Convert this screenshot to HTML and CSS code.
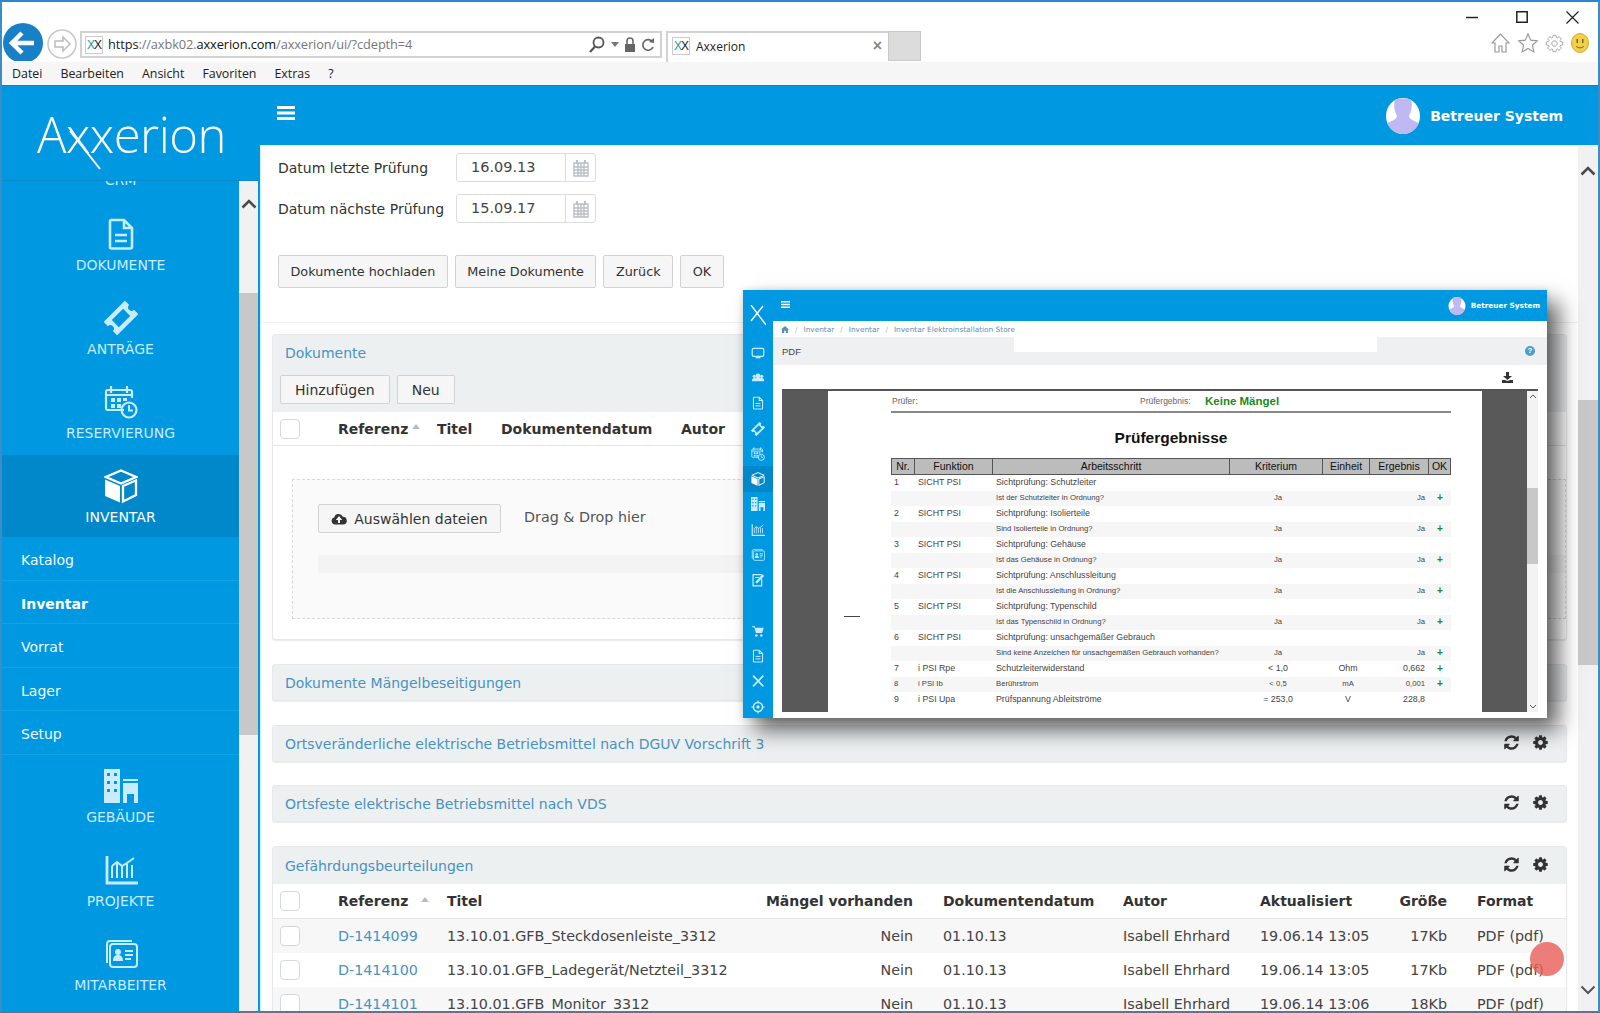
FILE: index.html
```html
<!DOCTYPE html>
<html lang="de">
<head>
<meta charset="utf-8">
<title>Axxerion</title>
<link rel="stylesheet" href="styles.css">
</head>
<body>
<svg class="defs" aria-hidden="true">
  <symbol id="i-refresh" viewBox="0 0 1792 1792"><path d="M1639 1056q0 5-1 7-64 268-268 434.5t-478 166.5q-146 0-282.5-55t-243.5-157l-129 129q-19 19-45 19t-45-19-19-45v-448q0-26 19-45t45-19h448q26 0 45 19t19 45-19 45l-137 137q71 66 161 102t187 36q134 0 250-65t186-179q11-17 53-117 8-23 30-23h192q13 0 22.5 9.5t9.5 22.5zm25-800v448q0 26-19 45t-45 19h-448q-26 0-45-19t-19-45 19-45l138-138q-148-137-349-137-134 0-250 65t-186 179q-11 17-53 117-8 23-30 23h-199q-13 0-22.5-9.5t-9.5-22.5v-7q65-268 270-434.5t480-166.5q146 0 284 55.5t245 156.5l130-129q19-19 45-19t45 19 19 45z"/></symbol>
  <symbol id="i-gear" viewBox="0 0 1792 1792"><path d="M1152 896q0-106-75-181t-181-75-181 75-75 181 75 181 181 75 181-75 75-181zm512-109v222q0 12-8 23t-20 13l-185 28q-19 54-39 91 35 50 107 138 10 12 10 25t-9 23q-27 37-99 108t-94 71q-12 0-26-9l-138-108q-44 23-91 38-16 136-29 186-7 28-36 28h-222q-14 0-24.5-8.5t-11.5-21.5l-28-184q-49-16-90-37l-141 107q-10 9-25 9-14 0-25-11-126-114-165-168-7-10-7-23 0-12 8-23 15-21 51-66.5t54-70.5q-27-50-41-99l-183-27q-13-2-21-12.5t-8-23.5v-222q0-12 8-23t19-13l186-28q14-46 39-92-40-57-107-138-10-12-10-24 0-10 9-23 26-36 98.5-107.5t94.5-71.5q13 0 26 10l138 107q44-23 91-38 16-136 29-186 7-28 36-28h222q14 0 24.5 8.5t11.5 21.5l28 184q49 16 90 37l142-107q9-9 24-9 13 0 25 10 129 119 165 170 7 8 7 22 0 12-8 23-15 21-51 66.5t-54 70.5q26 50 41 98l183 28q13 2 21 12.5t8 23.5z"/></symbol>
  <symbol id="i-doc" viewBox="0 0 34 34"><path fill="none" stroke="currentColor" stroke-width="2.6" d="M7 3h13l8 8v19a1.500 1.500 0 0 1-1.500 1.500h-19A1.500 1.500 0 0 1 6 30V4.500A1.500 1.500 0 0 1 7 3zM20 3v8h8"/><path stroke="currentColor" stroke-width="2.4" d="M11 18h12M11 24h12"/></symbol>
  <symbol id="i-ticket" viewBox="0 0 34 34"><g transform="rotate(-45 17 17)"><path fill="currentColor" fill-rule="evenodd" d="M2 7.500h30v6a3.500 3.500 0 0 0 0 7v6H2v-6a3.500 3.500 0 0 0 0-7zM9 12v10h16V12z"/></g></symbol>
  <symbol id="i-cal" viewBox="0 0 34 34"><path fill="none" stroke="currentColor" stroke-width="2.2" d="M20 25H4a2 2 0 0 1-2-2V7a2 2 0 0 1 2-2h22a2 2 0 0 1 2 2v6"/><path stroke="currentColor" stroke-width="2.2" d="M7 1v7M23 1v7M2 10h26"/><path fill="currentColor" d="M7 13h4v4H7zM13 13h4v4h-4zM19 13h4v3h-4zM7 19h4v4H7zM13 19h4v4h-4z"/><circle cx="25" cy="25" r="7.500" fill="none" stroke="currentColor" stroke-width="2.200"/><path fill="none" stroke="currentColor" stroke-width="2" d="M25 20v5.500h4"/></symbol>
  <symbol id="i-cube" viewBox="0 0 34 34"><path fill="none" stroke="currentColor" stroke-width="2.300" d="M17 1.500 32 8l-15 6.500L2 8zM19 17l13-5.500V26l-13 6.500z"/><path fill="currentColor" d="M1 10.500l15 6.500v16.500L1 27z"/></symbol>
  <symbol id="i-building" viewBox="0 0 34 34"><path fill="currentColor" fill-rule="evenodd" d="M0 0h16v34H0zM3 4v3h3V4zM10 4v3h3V4zM3 12v3h3v-3zM10 12v3h3v-3zM3 20v3h3v-3zM10 20v3h3v-3z"/><path fill="currentColor" fill-rule="evenodd" d="M19 10h15v2H19zM19 14h15v20h-4v-9h-7v9h-4z"/></symbol>
  <symbol id="i-chart" viewBox="0 0 34 34"><path fill="none" stroke="currentColor" stroke-width="2.800" d="M3 3v27h31"/><path fill="none" stroke="currentColor" stroke-width="2" d="M8 25V13M13 25V9M18 25V13M23 25V11M28 25V12M8 13l5-4 5 4 5-3 7-5"/></symbol>
  <symbol id="i-card" viewBox="0 0 34 34"><rect x="6" y="7" width="27" height="23" rx="3" fill="none" stroke="currentColor" stroke-width="2"/><path fill="none" stroke="currentColor" stroke-width="2" d="M3 26V7a3 3 0 0 1 3-3h22"/><circle cx="14" cy="15" r="3" fill="currentColor"/><path fill="currentColor" d="M9 24c0-4 2-6 5-6s5 2 5 6zM21 13h8v2h-8zM21 17h8v2h-8zM21 21h6v2h-6z"/></symbol>
  <symbol id="i-monitor" viewBox="0 0 34 34"><rect x="3" y="6" width="28" height="19" rx="3" fill="none" stroke="currentColor" stroke-width="3"/><path fill="currentColor" d="M11 27h12v3H11z"/></symbol>
  <symbol id="i-users" viewBox="0 0 34 34"><circle cx="17" cy="12" r="6" fill="currentColor"/><circle cx="8" cy="13" r="4" fill="currentColor"/><circle cx="26" cy="13" r="4" fill="currentColor"/><path fill="currentColor" d="M2 25c0-6 3-8 6-8h18c3 0 6 2 6 8z"/></symbol>
  <symbol id="i-cart" viewBox="0 0 34 34"><path fill="currentColor" d="M3 5h6l1 4h21l-4 13H12L8 8H3z"/><circle cx="13" cy="28" r="3" fill="currentColor"/><circle cx="25" cy="28" r="3" fill="currentColor"/></symbol>
  <symbol id="i-edit" viewBox="0 0 34 34"><path fill="none" stroke="currentColor" stroke-width="3" d="M26 14v17H5V4h21"/><path fill="currentColor" d="M12 20 28 3l4 4-16 17-5 1zM10 10h10v2H10z"/></symbol>
  <symbol id="i-tools" viewBox="0 0 34 34"><path fill="none" stroke="currentColor" stroke-width="4" d="M5 4l25 26M30 4 5 30"/></symbol>
  <symbol id="i-target" viewBox="0 0 34 34"><circle cx="17" cy="17" r="11" fill="none" stroke="currentColor" stroke-width="4"/><circle cx="17" cy="17" r="4" fill="currentColor"/><path stroke="currentColor" stroke-width="3" d="M17 1v6M17 27v6M1 17h6M27 17h6"/></symbol>
  <symbol id="i-avatar" viewBox="0 0 34 36"><ellipse cx="17" cy="18" rx="17" ry="18" fill="#fff"/><path fill="#c0b8f2" d="M9 1.500C12 0 22 0 25 1.500 27 8 25 14 23 18c0 3 5 5 10 7-3 7-9 11-16 11S4 32 1 25c5-2 10-4 10-7C9 14 7 8 9 1.500z"/></symbol>
  <symbol id="i-calgrid" viewBox="0 0 16 18"><path fill="none" stroke="#b9c0c5" stroke-width="1.400" d="M1 4h14v13H1zM1 8h14M1 11h14M1 14h14M5 4v13M8 4v13M11 4v13"/><path stroke="#b9c0c5" stroke-width="2" d="M4 1v4M12 1v4"/></symbol>
</svg>

<div class="window">
  <header class="chrome">
    <div class="toolbar">
      <svg class="nav-back" viewBox="0 0 40 38"><circle cx="20" cy="20" r="20" fill="#1780c6"/><path fill="none" stroke="#fff" stroke-width="4.500" d="M31 20H10M19 10 9 20l10 10"/></svg>
      <svg class="nav-fwd" viewBox="0 0 30 30"><circle cx="15" cy="15" r="14" fill="#fff" stroke="#c8c8c8" stroke-width="1.500"/><path fill="none" stroke="#bcbcbc" stroke-width="1.500" d="M8 12h8V8l7 7-7 7v-4H8z"/></svg>
      <div class="address">
        <span class="fav"><i>X</i>X</span>
        <span class="url">https<span class="dim">://axbk02.</span><b>axxerion.com</b><span class="dim">/axxerion/ui/?cdepth=4</span></span>
        <span class="addr-tools">
          <svg width="18" height="18" viewBox="0 0 18 18"><circle cx="10.500" cy="6.500" r="5" fill="none" stroke="#555" stroke-width="1.800"/><path stroke="#555" stroke-width="2.200" d="M7 10.500 2 16"/></svg>
          <svg width="8" height="6" viewBox="0 0 8 6"><path fill="#777" d="M0 0h8L4 5z"/></svg>
          <svg width="12" height="16" viewBox="0 0 12 16"><path fill="#666" d="M1 7h10v8H1z"/><path fill="none" stroke="#666" stroke-width="1.600" d="M3 7V4a3 3 0 0 1 6 0v3"/></svg>
          <svg width="14" height="16" viewBox="0 0 14 16"><path fill="none" stroke="#666" stroke-width="1.700" d="M11.500 5A5.300 5.300 0 1 0 12 10"/><path fill="#666" d="M8 5l5 1V1z"/></svg>
        </span>
      </div>
      <div class="tab">
        <span class="fav"><i>X</i>X</span>
        <span class="tab-title">Axxerion</span>
        <span class="tab-close">×</span>
      </div>
      <div class="newtab"></div>
      <div class="right-tools">
        <div class="win-ctrl">
          <svg width="12" height="12" viewBox="0 0 12 12"><path stroke="#222" stroke-width="1.500" d="M0 6.500h12"/></svg>
          <svg width="12" height="12" viewBox="0 0 12 12"><path fill="none" stroke="#222" stroke-width="1.500" d="M.8.8h10.400v10.400H.8z"/></svg>
          <svg width="13" height="13" viewBox="0 0 13 13"><path stroke="#222" stroke-width="1.200" d="M.5.500l12 12M12.500.500l-12 12"/></svg>
        </div>
        <div class="ie-tools">
          <svg width="19" height="20" viewBox="0 0 19 20"><path fill="none" stroke="#9b9b9b" stroke-width="1.200" d="M9.500 1 1 10h3v9h4v-6h3v6h4v-9h3z"/></svg>
          <svg width="20" height="20" viewBox="0 0 20 20"><path fill="none" stroke="#9b9b9b" stroke-width="1.200" d="M10 1l2.700 6.200 6.700.6-5 4.500 1.500 6.600L10 15.400l-5.900 3.500 1.500-6.600-5-4.500 6.700-.6z"/></svg>
          <svg width="19" height="19" viewBox="0 0 1792 1792"><use href="#i-gear" fill="none" stroke="#9b9b9b" stroke-width="90"/></svg>
          <svg width="18" height="20" viewBox="0 0 18 20"><ellipse cx="9" cy="10" rx="8.500" ry="9.500" fill="#f3cf47" stroke="#d0a93a"/><path fill="#7a6420" d="M5.500 6h1.500v4H5.500zM11 6h1.500v4H11z"/><path fill="none" stroke="#7a6420" d="M5 13c2 2.500 6 2.500 8 0"/></svg>
        </div>
      </div>
    </div>
    <nav class="menubar">
      <span>Datei</span><span>Bearbeiten</span><span>Ansicht</span><span>Favoriten</span><span>Extras</span><span>?</span>
    </nav>
  </header>

  <div class="app">
    <aside class="sidebar">
      <div class="logo">
        <span class="logo-text">Axxerion</span>
        <svg class="logo-stroke" viewBox="0 0 40 45"><path stroke="#fff" stroke-width="2" d="M4 2l30 38"/></svg>
      </div>
      <div class="side-body">
        <nav class="side-nav">
          <a class="side-item side-item-crm"><span class="side-label">CRM</span></a>
          <a class="side-item"><svg class="side-icon"><use href="#i-doc"/></svg><span class="side-label">DOKUMENTE</span></a>
          <a class="side-item"><svg class="side-icon"><use href="#i-ticket"/></svg><span class="side-label">ANTRÄGE</span></a>
          <a class="side-item"><svg class="side-icon"><use href="#i-cal"/></svg><span class="side-label">RESERVIERUNG</span></a>
          <a class="side-item side-active"><svg class="side-icon"><use href="#i-cube"/></svg><span class="side-label">INVENTAR</span></a>
          <a class="side-sub">Katalog</a>
          <a class="side-sub side-sub-on">Inventar</a>
          <a class="side-sub">Vorrat</a>
          <a class="side-sub">Lager</a>
          <a class="side-sub">Setup</a>
          <a class="side-item"><svg class="side-icon"><use href="#i-building"/></svg><span class="side-label">GEBÄUDE</span></a>
          <a class="side-item"><svg class="side-icon"><use href="#i-chart"/></svg><span class="side-label">PROJEKTE</span></a>
          <a class="side-item"><svg class="side-icon"><use href="#i-card"/></svg><span class="side-label">MITARBEITER</span></a>
        </nav>
        <div class="side-scroll">
          <svg class="arrow-up" viewBox="0 0 16 10"><path fill="none" stroke="#4a4a4a" stroke-width="2.600" d="M1.500 8.500 8 2l6.500 6.500"/></svg>
          <div class="side-thumb"></div>
        </div>
      </div>
    </aside>

    <main class="main">
      <div class="topbar">
        <svg class="burger" viewBox="0 0 18 14"><path stroke="#fff" stroke-width="3" d="M0 1.500h18M0 7h18M0 12.500h18"/></svg>
        <div class="user">
          <svg class="user-avatar"><use href="#i-avatar"/></svg>
          <span>Betreuer System</span>
        </div>
      </div>
      <div class="main-row">
        <div class="content">
          <div class="form-row">
            <label class="form-label">Datum letzte Prüfung</label>
            <div class="date"><span class="date-val">16.09.13</span><span class="date-btn"><svg width="16" height="18"><use href="#i-calgrid"/></svg></span></div>
          </div>
          <div class="form-row">
            <label class="form-label">Datum nächste Prüfung</label>
            <div class="date"><span class="date-val">15.09.17</span><span class="date-btn"><svg width="16" height="18"><use href="#i-calgrid"/></svg></span></div>
          </div>
          <div class="actions">
            <button class="btn">Dokumente hochladen</button>
            <button class="btn">Meine Dokumente</button>
            <button class="btn">Zurück</button>
            <button class="btn">OK</button>
          </div>
          <hr class="rule">

          <section class="panel panel-docs">
            <div class="panel-head panel-head-tall">
              <h3 class="panel-title">Dokumente</h3>
              <div class="panel-btns">
                <button class="btn btn-sm">Hinzufügen</button>
                <button class="btn btn-sm">Neu</button>
              </div>
            </div>
            <div class="doc-cols">
              <span class="check"></span>
              <span>Referenz<i class="sort"></i></span>
              <span>Titel</span>
              <span>Dokumentendatum</span>
              <span>Autor</span>
            </div>
            <div class="drop">
              <div class="drop-row">
                <button class="btn btn-up">
                  <svg width="16" height="14" viewBox="0 0 16 14"><path fill="#333" fill-rule="evenodd" d="M4 12.500A3.500 3.500 0 0 1 3.300 5.600 4.500 4.500 0 0 1 11.800 4.700 3.900 3.900 0 0 1 12 12.500zM8 4 4.800 8h2.200v3h2V8h2.200z"/></svg>
                  Auswählen dateien
                </button>
                <span class="drop-text">Drag &amp; Drop hier</span>
              </div>
              <div class="progress"></div>
            </div>
          </section>

          <section class="panel panel-bar">
            <h3 class="panel-title">Dokumente Mängelbeseitigungen</h3>
          </section>
          <section class="panel panel-bar panel-bar-tight">
            <h3 class="panel-title">Ortsveränderliche elektrische Betriebsmittel nach DGUV Vorschrift 3</h3>
            <span class="panel-tools"><svg><use href="#i-refresh"/></svg><svg><use href="#i-gear"/></svg></span>
          </section>
          <section class="panel panel-bar">
            <h3 class="panel-title">Ortsfeste elektrische Betriebsmittel nach VDS</h3>
            <span class="panel-tools"><svg><use href="#i-refresh"/></svg><svg><use href="#i-gear"/></svg></span>
          </section>

          <section class="panel panel-grid">
            <div class="panel-bar panel-bar-in">
              <h3 class="panel-title">Gefährdungsbeurteilungen</h3>
              <span class="panel-tools"><svg><use href="#i-refresh"/></svg><svg><use href="#i-gear"/></svg></span>
            </div>
            <div class="grid-row grid-head">
              <span class="check"></span><span>Referenz<i class="sort sort-far"></i></span><span>Titel</span><span class="num">Mängel vorhanden</span><span>Dokumentendatum</span><span>Autor</span><span>Aktualisiert</span><span class="num">Größe</span><span>Format</span>
            </div>
            <div class="grid-row grid-alt">
              <span class="check"></span><a>D-1414099</a><span>13.10.01.GFB_Steckdosenleiste_3312</span><span class="num">Nein</span><span>01.10.13</span><span>Isabell Ehrhard</span><span>19.06.14 13:05</span><span class="num">17Kb</span><span>PDF (pdf)</span>
            </div>
            <div class="grid-row">
              <span class="check"></span><a>D-1414100</a><span>13.10.01.GFB_Ladegerät/Netzteil_3312</span><span class="num">Nein</span><span>01.10.13</span><span>Isabell Ehrhard</span><span>19.06.14 13:05</span><span class="num">17Kb</span><span>PDF (pdf)</span>
            </div>
            <div class="grid-row grid-alt">
              <span class="check"></span><a>D-1414101</a><span>13.10.01.GFB_Monitor_3312</span><span class="num">Nein</span><span>01.10.13</span><span>Isabell Ehrhard</span><span>19.06.14 13:06</span><span class="num">18Kb</span><span>PDF (pdf)</span>
            </div>
          </section>
        </div>
        <div class="main-scroll">
          <svg class="arrow-up" viewBox="0 0 16 10"><path fill="none" stroke="#4a4a4a" stroke-width="2.600" d="M1.500 8.500 8 2l6.500 6.500"/></svg>
          <div class="main-thumb"></div>
          <svg class="arrow-down" viewBox="0 0 16 10"><path fill="none" stroke="#555" stroke-width="2" d="M1.500 1.500 8 8l6.500-6.500"/></svg>
        </div>
      </div>
    </main>
  </div>

  <div class="pop">
    <aside class="pop-side">
      <svg class="pop-logo" viewBox="0 0 16 20"><path stroke="#fff" stroke-width="1.400" fill="none" d="M1 0 16 20M13 1 1 16"/></svg>
      <ul class="pop-icons">
        <li><svg><use href="#i-monitor"/></svg></li>
        <li><svg><use href="#i-users"/></svg></li>
        <li><svg><use href="#i-doc"/></svg></li>
        <li><svg><use href="#i-ticket"/></svg></li>
        <li><svg><use href="#i-cal"/></svg></li>
        <li class="pop-on"><svg><use href="#i-cube"/></svg></li>
        <li><svg><use href="#i-building"/></svg></li>
        <li><svg><use href="#i-chart"/></svg></li>
        <li><svg><use href="#i-card"/></svg></li>
        <li><svg><use href="#i-edit"/></svg></li>
        <li class="pop-gap"><svg><use href="#i-cart"/></svg></li>
        <li><svg><use href="#i-doc"/></svg></li>
        <li><svg><use href="#i-tools"/></svg></li>
        <li><svg><use href="#i-target"/></svg></li>
      </ul>
    </aside>
    <div class="pop-main">
      <div class="pop-top">
        <svg class="pop-burger" viewBox="0 0 18 14"><path stroke="#fff" stroke-width="3" d="M0 1.500h18M0 7h18M0 12.500h18"/></svg>
        <div class="pop-user"><svg class="pop-avatar"><use href="#i-avatar"/></svg><span>Betreuer System</span></div>
      </div>
      <div class="pop-crumbs">
        <svg width="8" height="7" viewBox="0 0 8 7"><path fill="#5b8fb3" d="M4 0 0 3.500h1V7h2.200V4.700h1.600V7H7V3.500h1z"/></svg>
        <span class="sl">/</span><span>Inventar</span><span class="sl">/</span><span>Inventar</span><span class="sl">/</span><span>Inventar Elektroinstallation Store</span>
      </div>
      <div class="pop-bar">
        <span class="pop-bar-title">PDF</span>
        <span class="pop-notch"></span>
        <span class="pop-help">?</span>
      </div>
      <div class="pop-dl">
        <svg width="11" height="11" viewBox="0 0 11 11"><path fill="#333" d="M4 0h3v4h3L5.500 8 1 4h3zM0 8h3l2.500 1L8 8h3v3H0z"/></svg>
      </div>
      <div class="viewer">
        <div class="viewer-gutter"></div>
        <div class="page">
          <div class="dash"></div>
          <div class="page-in">
            <div class="rep-top"><span class="rep-p">Prüfer:</span><span class="rep-e">Prüfergebnis:</span><strong>Keine Mängel</strong></div>
            <h2 class="rep-title">Prüfergebnisse</h2>
            <div class="rep-row rep-head"><span>Nr.</span><span>Funktion</span><span>Arbeitsschritt</span><span>Kriterium</span><span>Einheit</span><span>Ergebnis</span><span>OK</span></div>
            <div class="rep-row"><span>1</span><span>SICHT PSI</span><span>Sichtprüfung: Schutzleiter</span></div>
            <div class="rep-row rep-q"><span></span><span></span><span>Ist der Schutzleiter in Ordnung?</span><span class="c">Ja</span><span></span><span class="r">Ja</span><span class="p">+</span></div>
            <div class="rep-row"><span>2</span><span>SICHT PSI</span><span>Sichtprüfung: Isolierteile</span></div>
            <div class="rep-row rep-q"><span></span><span></span><span>Sind Isolierteile in Ordnung?</span><span class="c">Ja</span><span></span><span class="r">Ja</span><span class="p">+</span></div>
            <div class="rep-row"><span>3</span><span>SICHT PSI</span><span>Sichtprüfung: Gehäuse</span></div>
            <div class="rep-row rep-q"><span></span><span></span><span>Ist das Gehäuse in Ordnung?</span><span class="c">Ja</span><span></span><span class="r">Ja</span><span class="p">+</span></div>
            <div class="rep-row"><span>4</span><span>SICHT PSI</span><span>Sichtprüfung: Anschlussleitung</span></div>
            <div class="rep-row rep-q"><span></span><span></span><span>Ist die Anschlussleitung in Ordnung?</span><span class="c">Ja</span><span></span><span class="r">Ja</span><span class="p">+</span></div>
            <div class="rep-row"><span>5</span><span>SICHT PSI</span><span>Sichtprüfung: Typenschild</span></div>
            <div class="rep-row rep-q"><span></span><span></span><span>Ist das Typenschild in Ordnung?</span><span class="c">Ja</span><span></span><span class="r">Ja</span><span class="p">+</span></div>
            <div class="rep-row"><span>6</span><span>SICHT PSI</span><span>Sichtprüfung: unsachgemäßer Gebrauch</span></div>
            <div class="rep-row rep-q"><span></span><span></span><span>Sind keine Anzeichen für unsachgemäßen Gebrauch vorhanden?</span><span class="c">Ja</span><span></span><span class="r">Ja</span><span class="p">+</span></div>
            <div class="rep-row"><span>7</span><span>i PSI Rpe</span><span>Schutzleiterwiderstand</span><span class="c">&lt; 1,0</span><span class="c">Ohm</span><span class="r">0,662</span><span class="p">+</span></div>
            <div class="rep-row rep-q"><span>8</span><span>i PSI Ib</span><span>Berührstrom</span><span class="c">&lt; 0,5</span><span class="c">mA</span><span class="r">0,001</span><span class="p">+</span></div>
            <div class="rep-row"><span>9</span><span>i PSI Upa</span><span>Prüfspannung Ableitströme</span><span class="c">= 253,0</span><span class="c">V</span><span class="r">228,8</span></div>
          </div>
        </div>
        <div class="viewer-gutter viewer-gutter-r"></div>
        <div class="pop-scroll">
          <svg class="pop-arr" viewBox="0 0 8 5"><path fill="none" stroke="#555" d="M1 4l3-3 3 3"/></svg>
          <div class="pop-thumb"></div>
          <svg class="pop-arr pop-arr-d" viewBox="0 0 8 5"><path fill="none" stroke="#555" d="M1 1l3 3 3-3"/></svg>
        </div>
      </div>
    </div>
  </div>

  <div class="touch"></div>
</div>
</body>
</html>
```

FILE: styles.css
```css
* { box-sizing: border-box; }
html, body { margin: 0; padding: 0; height: 100%; background: #fff; }
.defs { position: absolute; width: 0; height: 0; }
a { text-decoration: none; }
button { font: inherit; }
h2, h3 { margin: 0; font-weight: normal; }
ul { list-style: none; margin: 0; padding: 0; }

.window {
  position: relative;
  width: 1600px;
  height: 1013px;
  display: flex;
  flex-direction: column;
  overflow: hidden;
  border-top: 2px solid #2a86d2;
  border-left: 2px solid #3a8dc8;
  border-right: 2px solid #3a8dc8;
  border-bottom: 2px solid #3f7fa8;
  font-family: "DejaVu Sans", sans-serif;
  color: #333;
}

/* browser chrome */
.chrome { flex: none; font-family: "Open Sans", sans-serif; color: #222; }
.toolbar { height: 60px; display: flex; align-items: flex-start; background: #fff; overflow: hidden; }
.nav-back { flex: none; width: 40px; height: 38px; margin: 21px 0 0 1px; }
.nav-fwd { flex: none; width: 30px; height: 30px; margin: 27px 0 0 4px; }
.address {
  flex: none; width: 582px; height: 27px; margin: 29px 0 0 3px;
  border: 2px solid #d2d2d2; display: flex; align-items: center; padding-left: 3px;
}
.fav {
  flex: none; width: 18px; height: 18px; border: 1px solid #ccc; background: #fff;
  font: 12px/16px "Liberation Sans", sans-serif; color: #222; text-align: center; letter-spacing: -1px;
}
.fav i { font-style: normal; color: #1a9a9a; }
.url { margin: -1px 0 0 5px; font-size: 12.800px; color: #222; white-space: nowrap; letter-spacing: -.1px; }
.url b { font-weight: normal; color: #111; }
.dim { color: #777; }
.addr-tools { margin-left: auto; padding-right: 5px; display: flex; align-items: center; gap: 5px; }
.tab {
  flex: none; width: 222px; height: 31px; margin: 29px 0 0 4px;
  border-top: 2px solid #d2d2d2; border-left: 2px solid #d2d2d2;
  display: flex; align-items: center; padding: 0 6px 3px 4px;
}
.tab-title { margin-left: 6px; font-size: 12px; }
.tab-close { margin-left: auto; font: bold 16px "Liberation Sans", sans-serif; color: #888; }
.newtab { flex: none; width: 33px; height: 30px; margin-top: 29px; background: #dcdcdc; border: 1px solid #c8c8c8; }
.right-tools { margin-left: auto; width: 132px; }
.win-ctrl { height: 31px; padding: 9px 19px 0 0; display: flex; justify-content: flex-end; align-items: flex-start; gap: 38px; }
.ie-tools { display: flex; align-items: center; justify-content: flex-end; gap: 7px; padding-right: 9px; }
.ie-tools svg:first-child { margin-right: 1px; }
.menubar {
  height: 24px; background: #f6f6f6; border-bottom: 1px solid #666;
  display: flex; align-items: center; padding-left: 10px; gap: 18px; font-size: 12.400px;
}

/* application */
.app { flex: 1; min-height: 0; display: flex; }
.sidebar { flex: none; width: 258px; display: flex; flex-direction: column; background: #0098e0; padding-right: 2px; }
.logo { position: relative; flex: none; height: 95px; border-bottom: 1px solid #0a8bcc; display: flex; padding: 20px 0 0 35px; }
.logo-text { font: 300 49px/56px "Open Sans", sans-serif; color: #fff; letter-spacing: -.5px; }
.logo-stroke { position: absolute; left: 64px; top: 43px; width: 40px; height: 45px; }
.side-body { flex: 1; min-height: 0; display: flex; }
.side-nav { flex: none; width: 237px; overflow: hidden; }
.side-item {
  display: flex; flex-direction: column; align-items: center; height: 84px; padding-top: 14px;
  color: #c8ecfc; text-decoration: none;
}
.side-item-crm { margin-top: -62px; justify-content: flex-end; padding-bottom: 14px; }
.side-icon { width: 34px; height: 34px; flex: none; }
.side-label { margin-top: 6px; font-size: 14px; line-height: 17px; }
.side-active { height: 82px; background: #0088cb; color: #fff; }
.side-sub { display: block; height: 43.500px; line-height: 47px; padding-left: 19px; font-size: 14px; color: #f2faff; border-bottom: 1px solid #12a2e6; }
.side-sub-on { font-weight: bold; color: #fff; }
.side-scroll { flex: 1; background: #f1f1f1; padding-top: 18px; position: relative; }
.arrow-up { display: block; width: 16px; height: 10px; margin: 0 auto; }
.side-thumb { height: 442px; margin-top: 84px; background: #c8c8c8; }

.main { flex: 1; min-width: 0; display: flex; flex-direction: column; background: #fff; }
.topbar { flex: none; height: 60px; background: #0098e0; display: flex; align-items: center; padding: 0 35px 0 17px; border-bottom: 1px solid #dff3fb; }
.burger { width: 18px; height: 14px; margin-top: -6px; }
.user { margin-left: auto; display: flex; align-items: center; gap: 10px; color: #fff; font-weight: bold; font-size: 14px; }
.user-avatar { width: 34px; height: 36px; }
.main-row { flex: 1; min-height: 0; display: flex; }
.content { flex: 1; min-width: 0; overflow: hidden; padding-top: 7px; border-left: 1px solid #d6f2fc; }
.main-scroll { flex: none; width: 20px; background: #f1f1f1; padding-top: 20px; position: relative; display: flex; flex-direction: column; }
.main-thumb { height: 265px; margin-top: 224px; background: #c8c8c8; }
.arrow-down { display: block; width: 16px; height: 10px; margin: auto auto 16px; }

.form-row { display: flex; align-items: center; height: 29px; margin: 0 0 12px 17px; }
.form-label { width: 178px; font-size: 14px; color: #333; }
.date { width: 140px; height: 29px; display: flex; border: 1px solid #dcdcdc; border-radius: 3px; background: #fff; }
.date-val { flex: 1; padding-left: 14px; line-height: 27px; font-size: 14.500px; color: #444; }
.date-btn { width: 30px; display: flex; align-items: center; justify-content: center; border-left: 1px solid #dcdcdc; }
.actions { display: flex; gap: 7px; margin: 32px 0 0 17px; }
.btn {
  height: 33px; padding: 0 11.500px; background: #f6f6f6; border: 1px solid #d2d2d2; border-radius: 2px;
  color: #333; font-size: 12.800px; font-family: "DejaVu Sans", sans-serif; white-space: nowrap;
}
.rule { height: 1px; border: 0; background: #f0f0f0; margin: 34px 0 11px; }

.panel { margin: 0 11px 24px 11px; border: 1px solid #e6e8ea; border-radius: 3px; background: #fff; box-shadow: 0 1px 1px rgba(0,0,0,.08); }
.panel-title { font-size: 14px; color: #4a92bf; }
.panel-head { background: #edf0f1; }
.panel-head-tall { height: 77px; padding: 10px 0 0 12px; }
.panel-btns { display: flex; gap: 7px; margin: 14px 0 0 -5px; }
.btn-sm { height: 29px; padding: 0 14px; font-size: 14px; }
.panel-docs { height: 306px; }
.doc-cols { display: grid; grid-template-columns: 58px 99px 64px 180px 1fr; align-items: center; height: 34px; padding-left: 7px; border-bottom: 1px solid #e3e5e6; font-weight: bold; font-size: 14px; color: #333; }
.check { display: block; width: 20px; height: 20px; border: 1px solid #d5d8da; border-radius: 4px; background: #fff; }
.sort { display: inline-block; margin: 0 0 6px 4px; border: 4px solid transparent; border-bottom: 5px solid #b9bdc0; border-top: 0; vertical-align: middle; }
.sort-far { margin-left: 13px; }
.drop { margin: 33px 0 0 19px; height: 140px; border: 1px dashed #d8d8d8; background: #fafafa; padding: 24px 0 0 25px; }
.drop-row { display: flex; align-items: center; gap: 23px; }
.btn-up { height: 29px; width: 183px; padding: 0; display: flex; align-items: center; justify-content: center; gap: 7px; font-size: 14px; }
.drop-text { font-size: 14.300px; color: #555; margin-top: -3px; }
.progress { height: 18px; margin-top: 22px; background: #f3f3f3; border-radius: 2px; }

.panel-bar { height: 37px; display: flex; align-items: center; background: #edf0f1; padding: 0 12px; }
.panel-bar-tight { margin-bottom: 23px; }
.panel-bar-in { border: 0; }
.panel-tools { margin-left: auto; display: flex; gap: 12px; padding-right: 5px; margin-top: -3px; color: #333; }
.panel-tools svg { width: 17px; height: 17px; fill: #333; }
.panel-grid { margin-bottom: 0; }
.grid-row {
  display: grid;
  grid-template-columns: 58px 109px 300px 166px 210px 137px 130px 57px 1fr;
  align-items: center; height: 34px; padding-left: 7px; font-size: 14.300px; color: #444; white-space: nowrap;
}
.grid-row > :nth-child(5), .grid-row > :nth-child(9) { padding-left: 30px; }
.grid-head { font-weight: bold; font-size: 14px; color: #333; border-bottom: 1px solid #e3e5e6; height: 35px; }
.grid-alt { background: #f7f7f7; }
.grid-row a { color: #4a92bf; }
.num { text-align: right; }

/* popup preview */
.pop {
  position: absolute; left: 741px; top: 288px; width: 804px; height: 428px; display: flex;
  background: #fff; box-shadow: 12px 12px 20px rgba(0,0,0,.6), 0 0 6px rgba(0,0,0,.15);
  font-family: "Liberation Sans", sans-serif;
}
.pop-side { flex: none; width: 30px; background: #0098e0; color: #c8ecfc; }
.pop-logo { display: block; width: 16px; height: 20px; margin: 15px 0 15px 7px; }
.pop-icons li { height: 25.300px; display: flex; align-items: center; justify-content: center; }
.pop-icons svg { width: 14px; height: 14px; }
.pop-on { background: #0088cb; color: #fff; }
.pop-gap { margin-top: 25px; }
.pop-main { flex: 1; min-width: 0; display: flex; flex-direction: column; }
.pop-top { flex: none; height: 31px; background: #0098e0; display: flex; align-items: center; padding: 0 7px 0 8px; }
.pop-burger { width: 9px; height: 7px; margin-top: -2px; }
.pop-user { margin-left: auto; display: flex; align-items: center; gap: 5px; font: bold 7.300px "DejaVu Sans", sans-serif; color: #fff; }
.pop-avatar { width: 18px; height: 18px; }
.pop-crumbs { flex: none; height: 16px; display: flex; align-items: center; gap: 6px; padding-left: 8px; font: 7.350px "DejaVu Sans", sans-serif; color: #5b8fb3; }
.sl { color: #b5b5b5; }
.pop-bar { position: relative; flex: none; height: 28px; background: #eef0f1; display: flex; align-items: center; padding-left: 9px; font-size: 9.500px; color: #444; }
.pop-notch { position: absolute; left: 241px; top: 0; width: 363px; height: 15px; background: #fff; }
.pop-help { margin-left: auto; margin-right: 12px; width: 10px; height: 10px; border-radius: 50%; background: #4a9fd0; color: #fff; font: bold 8px/10px "Liberation Sans", sans-serif; text-align: center; }
.pop-dl { flex: none; height: 24px; display: flex; justify-content: flex-end; align-items: center; padding-right: 34px; }
.viewer { flex: none; height: 323px; margin: 0 9px 0 9px; display: flex; border-top: 2px solid #555; overflow: hidden; }
.viewer-gutter { flex: none; width: 46px; background: #595959; }
.viewer-gutter-r { width: 45px; }
.page { position: relative; flex: 1; min-width: 0; background: #fff; padding: 0 31px 0 63px; }
.dash { position: absolute; left: 16px; top: 225px; width: 16px; height: 1px; background: #444; }
.page-in { font-size: 8.800px; color: #444; }
.rep-top { display: flex; align-items: center; height: 22px; border-bottom: 2px solid #888; font-size: 8.500px; color: #666; padding-left: 1px; }
.rep-p { width: 248px; }
.rep-e { width: 65px; }
.rep-top strong { font-size: 11.500px; color: #1a8a1a; }
.rep-title { height: 45px; line-height: 49px; text-align: center; font-size: 15.500px; font-weight: bold; color: #111; }
.rep-row {
  display: grid; grid-template-columns: 24px 78px 237px 93px 47px 59px 22px;
  height: 15.500px; line-height: 15px; white-space: nowrap;
}
.rep-row > span { padding-left: 3px; }
.rep-row .c { text-align: center; }
.rep-row .r { text-align: right; padding-right: 4px; }
.rep-row .p { color: #1a8a1a; font-weight: bold; font-size: 10px; text-align: center; padding-left: 0; }
.rep-q { background: #f6f6f6; font-size: 7.700px; line-height: 14px; }
.rep-head { height: 17px; background: #bcbcbc; border: 1px solid #555; font-size: 10.500px; color: #111; grid-template-columns: 23px 78px 237px 93px 47px 59px 21px; }
.rep-head > span { border-right: 1px solid #555; text-align: center; padding: 0; line-height: 14px; }
.rep-head > span:last-child { border-right: 0; }
.pop-scroll { flex: none; width: 11px; background: #f3f3f3; display: flex; flex-direction: column; align-items: center; }
.pop-arr { display: block; flex: none; width: 8px; height: 5px; margin-top: 3px; }
.pop-thumb { width: 100%; height: 76px; margin-top: 89px; background: #c8c8c8; }
.pop-arr-d { margin: auto 0 3px; }

.touch { position: absolute; left: 1528px; top: 940px; width: 34px; height: 34px; border-radius: 50%; background: rgba(232, 96, 92, .82); }
```
